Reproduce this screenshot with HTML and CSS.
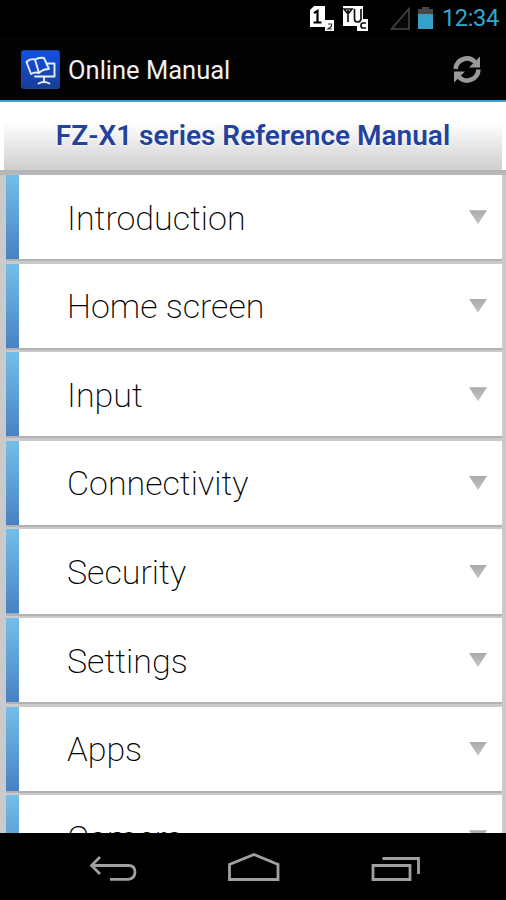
FILE: index.html
```
<!DOCTYPE html>
<html lang="en">
<head>
<meta charset="utf-8">
<title>Online Manual</title>
<link rel="stylesheet" href="styles.css">
</head>
<body>
<div class="phone">
  <div class="status">
    <svg class="status-icons" width="136" height="37" viewBox="0 0 136 37">
      <path fill="#fff" d="M10 10l4-4h11v14h9v11h-9v-4H10z"/>
      <path fill="none" stroke="#000" stroke-width="2.200" d="M14 13l3.500-2V22M13.500 22.500h8"/>
      <path fill="none" stroke="#333" stroke-width="1.200" d="M28 24h3.500v2.300L28 29h4"/>
      <path fill="#fff" d="M43 6h20v13h5v12H57v-5H43z"/>
      <path fill="none" stroke="#111" stroke-width="1.700" d="M44 9l4 5 4-5zM48 10v12M54.500 9v10q0 3 3 3t3.500-3V9M66 23h-3q-2 0-2 2.500t2 2.500h3"/>
      <path fill="#080808" stroke="#484848" stroke-width="1.500" d="M91.500 29L109 8.500V29z"/>
      <path fill="#484848" d="M118 9h4V7h7v2h4v6h-15z"/>
      <path fill="#36a0c8" d="M118 14h15v15h-15z"/>
    </svg>
    <span class="clock">12:34</span>
  </div>
  <div class="appbar">
    <svg class="logo" width="39" height="39" viewBox="0 0 39 39">
      <defs><linearGradient id="lg" x1="0" y1="0" x2="0" y2="1"><stop offset="0" stop-color="#1450e6"/><stop offset="1" stop-color="#173f94"/></linearGradient></defs>
      <rect x=".5" y=".5" width="38" height="38" rx="2" fill="url(#lg)" stroke="#1c468e"/>
      <g fill="none" stroke="#e4eeff" stroke-width="1.900" stroke-linejoin="round" stroke-linecap="round">
        <path d="M5.500 12Q9 8 14 9.500L18 23Q14 21.500 10 24zM14 9.500Q18 7 23 8L28 19Q22 19 18 23"/>
        <path d="M26.500 13.500H33.500V26.500H14M23 27v5M17.500 33.500q5.500-3 11 0"/>
      </g>
    </svg>
    <span class="app-title">Online Manual</span>
    <svg class="refresh" width="30" height="30" viewBox="0 0 30 30">
      <g fill="none" stroke="#999" stroke-width="4.600"><path d="M3.600 14A11.300 11.300 0 0 1 23 7"/><path d="M26.400 14.500A11.300 11.300 0 0 1 7 22"/></g>
      <path fill="#999" d="M28 1.500V12.500H17zM2 27.500V16.500H13z"/>
    </svg>
  </div>
  <div class="heading"><h1>FZ-X1 series Reference Manual</h1></div>
  <div class="list">
    <div class="row"><span class="label">Introduction</span><i class="arrow"></i></div>
    <div class="row"><span class="label">Home screen</span><i class="arrow"></i></div>
    <div class="row"><span class="label">Input</span><i class="arrow"></i></div>
    <div class="row"><span class="label">Connectivity</span><i class="arrow"></i></div>
    <div class="row"><span class="label">Security</span><i class="arrow"></i></div>
    <div class="row"><span class="label">Settings</span><i class="arrow"></i></div>
    <div class="row"><span class="label">Apps</span><i class="arrow"></i></div>
    <div class="row"><span class="label">Camera</span><i class="arrow"></i></div>
  </div>
  <div class="nav">
    <svg width="506" height="67" viewBox="0 0 506 67">
      <g fill="none" stroke="#a0a0a0" stroke-width="2.800">
        <path d="M91 32.500H128.500Q135 32.500 135 39T128.500 46.300H110M100 24L91.500 32.500L100 41"/>
        <path d="M229.500 46.500V31.500L254 21.500L278 31.500V46.500z"/>
        <path d="M373 32.500h37v14h-37zM382.500 25.500H418.500V41"/>
      </g>
    </svg>
  </div>
</div>
</body>
</html>
```
FILE: styles.css
```
* { box-sizing: border-box; }
body { margin: 0; background: #000; font-family: Roboto, "Liberation Sans", sans-serif; }
.phone { width: 506px; height: 900px; display: flex; flex-direction: column; overflow: hidden; }
.status { height: 37px; flex: none; display: flex; justify-content: flex-end; background: #000; }
.status-icons { flex: none; margin-right: 6px; }
.clock { width: 64px; font-size: 23.6px; letter-spacing: -.4px; line-height: 37px; color: #36a6d0; white-space: nowrap; }
.appbar { height: 65px; flex: none; display: flex; align-items: center; padding: 0 24px 0 21px; background: #030303; border-bottom: 2px solid #3aa6d0; }
.logo { flex: none; margin-top: 2px; }
.app-title { flex: 1; margin: 3px 0 0 8px; font-size: 25.5px; line-height: 30px; color: #f0f0f0; white-space: nowrap; }
.refresh { flex: none; margin-top: 2px; }
.heading { height: 73px; flex: none; padding: 0 4px; background: #fff; border-style: solid; border-image: linear-gradient(#858585, #b8b8b8) 5; border-width: 0 0 5px; }
.heading h1 { margin: 0; height: 68px; background: linear-gradient(#fff 30%, #cecece); color: #22429b; font-size: 28px; font-weight: 600; line-height: 67px; text-align: center; text-shadow: 0 0 2px #fff, 0 0 2px #fff; white-space: nowrap; }
.list { height: 658px; flex: none; padding: 0 4px 0 6px; overflow: hidden; background: #cacaca; }
.row { height: 84.300px; margin-bottom: 4.300px; display: flex; align-items: center; justify-content: space-between; padding: 0 15px 0 61px; background: linear-gradient(#74bee9, #4781c4) left / 13px 100% no-repeat, #fff; box-shadow: 0 2px #b2b2b2; }
.label { font-size: 34px; font-weight: 200; line-height: 42px; color: #000; padding-top: 1px; white-space: nowrap; }
.arrow { width: 18px; height: 14px; background: linear-gradient(#aaa, #c4c4c4); clip-path: polygon(0 0, 100% 0, 50% 100%); }
.nav { height: 67px; flex: none; background: #000; }
.nav svg { display: block; }
```
